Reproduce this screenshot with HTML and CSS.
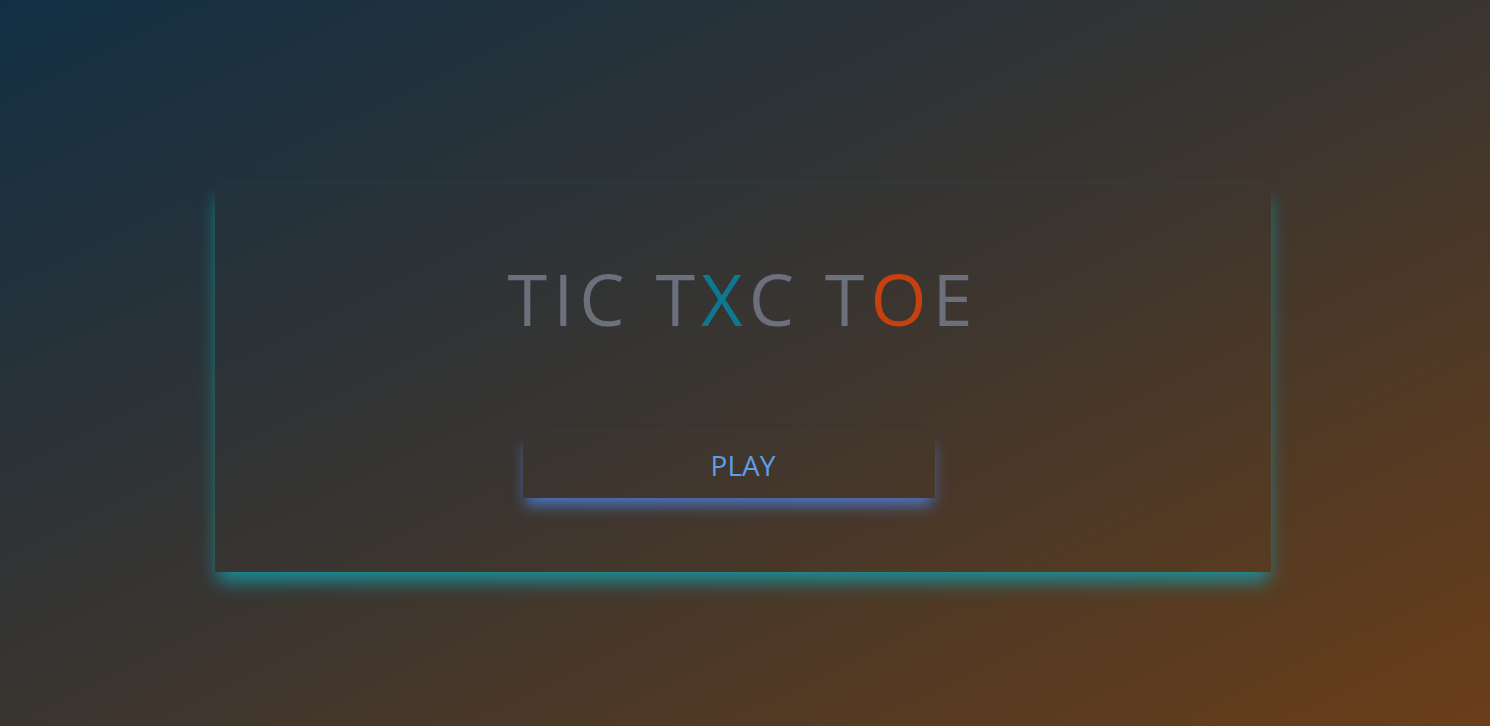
FILE: index.html
```html
<!DOCTYPE html>
<html lang="en">
<head>
<meta charset="utf-8">
<title>Tic Tac Toe</title>
<link rel="stylesheet" href="styles.css">
</head>
<body>
<main class="stage">
  <section class="card">
    <h1 class="title">TIC T<span class="x">X</span>C T<span class="o">O</span>E</h1>
    <button class="play">PLAY</button>
  </section>
</main>
</body>
</html>
```
FILE: styles.css
```css
html, body {
  margin: 0;
  height: 100%;
}
body {
  background: linear-gradient(to bottom right, #122f44 0%, #3a3530 50%, #6a3e19 100%);
  font-family: "Open Sans", "Noto Sans", sans-serif;
  overflow: hidden;
}
.stage {
  display: flex;
  justify-content: center;
  padding: 184px 4px 0 0;
}
.card {
  width: 1056px;
  box-sizing: border-box;
  padding: 78px 0 74px;
  display: flex;
  flex-direction: column;
  align-items: center;
  box-shadow: 0 12px 18px -3px rgba(22, 150, 162, 0.95);
}
.title {
  margin: 0 0 98px;
  font-size: 72px;
  line-height: 1;
  font-weight: 400;
  letter-spacing: 6px;
  color: #6b707c;
}
.title .x { color: #0e7892; }
.title .o { color: #c6410f; }
.play {
  width: 412px;
  height: 66px;
  margin-right: 28px;
  border: 0;
  background: transparent;
  color: #5e9ee8;
  font-family: "Open Sans", "Noto Sans", sans-serif;
  font-size: 28px;
  padding: 0 0 0 28px;
  box-shadow: 0 10px 14px -3px rgba(76, 120, 205, 0.95);
  cursor: pointer;
}
```
